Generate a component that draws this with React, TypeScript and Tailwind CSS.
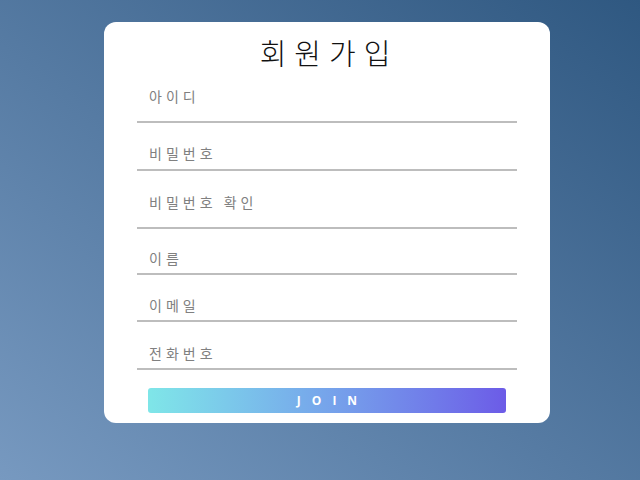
const fields = [
  { label: '아이디', type: 'text', wrap: 'mt-[8px]', h: 'h-[46px]' },
  { label: '비밀번호', type: 'password', wrap: 'mt-[18px]', h: 'h-[28px]' },
  { label: '비밀번호 확인', type: 'password', wrap: 'mt-[10px]', h: 'h-[46px]' },
  { label: '이름', type: 'text', wrap: 'mt-[18px]', h: 'h-[26px]' },
  { label: '이메일', type: 'email', wrap: 'mt-[19px]', h: 'h-[26px]' },
  { label: '전화번호', type: 'tel', wrap: 'mt-[20px]', h: 'h-[26px]' },
];

export default function App() {
  return (
    <div
      className="min-h-screen w-full flex justify-center pl-[14px] bg-linear-to-tr from-[#7799c0] to-[#2f5881]"
      style={{ fontFamily: '"Noto Sans CJK KR", "Noto Sans", sans-serif' }}
    >
      <div className="mt-[22px] mb-auto w-[446px] rounded-[12px] bg-white px-[33px] pb-[10px]">
        <h1 className="pt-[16px] pl-[4px] text-center text-[29px] leading-[29px] tracking-[8px] text-[#111] font-light">
          회원가입
        </h1>

        <form onSubmit={(e) => e.preventDefault()}>
          {fields.map((f) => (
            <div key={f.label} className={`${f.wrap} border-b-2 border-[#bdbdbd]`}>
              <input
                type={f.type}
                placeholder={f.label}
                className={`${f.h} block w-full pl-[12px] pb-[4px] text-[14px] tracking-[4px] text-[#333] placeholder:text-[#808080] outline-none bg-transparent`}
              />
            </div>
          ))}

          <button
            type="submit"
            className="mt-[18px] mx-[11px] block w-[358px] h-[25px] rounded-[3px] pl-[11px] bg-linear-to-r from-[#7fe6e8] to-[#6c5be7] text-white text-[12px] font-bold tracking-[11px] leading-none"
            style={{ fontFamily: '"Open Sans", "Liberation Sans", sans-serif' }}
          >
            JOIN
          </button>
        </form>
      </div>
    </div>
  );
}
